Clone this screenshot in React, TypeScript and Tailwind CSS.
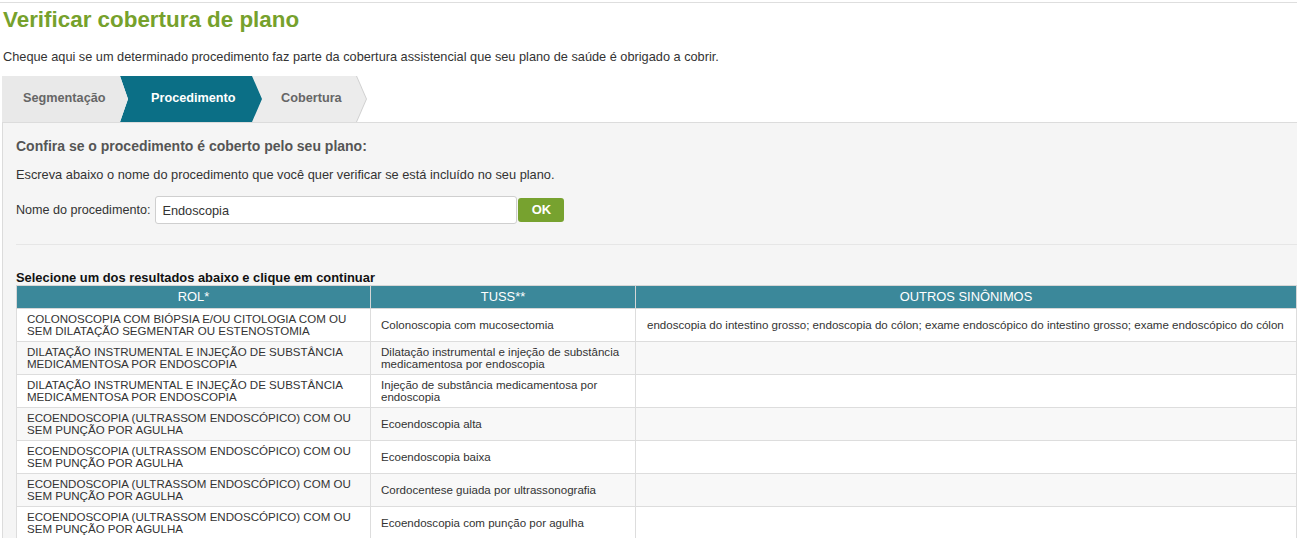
import React from 'react';

const rows = [
  {
    rol: 'COLONOSCOPIA COM BIÓPSIA E/OU CITOLOGIA COM OU SEM DILATAÇÃO SEGMENTAR OU ESTENOSTOMIA',
    tuss: 'Colonoscopia com mucosectomia',
    outros:
      'endoscopia do intestino grosso; endoscopia do cólon; exame endoscópico do intestino grosso; exame endoscópico do cólon',
  },
  {
    rol: 'DILATAÇÃO INSTRUMENTAL E INJEÇÃO DE SUBSTÂNCIA MEDICAMENTOSA POR ENDOSCOPIA',
    tuss: 'Dilatação instrumental e injeção de substância medicamentosa por endoscopia',
    outros: '',
  },
  {
    rol: 'DILATAÇÃO INSTRUMENTAL E INJEÇÃO DE SUBSTÂNCIA MEDICAMENTOSA POR ENDOSCOPIA',
    tuss: 'Injeção de substância medicamentosa por endoscopia',
    outros: '',
  },
  {
    rol: 'ECOENDOSCOPIA (ULTRASSOM ENDOSCÓPICO) COM OU SEM PUNÇÃO POR AGULHA',
    tuss: 'Ecoendoscopia alta',
    outros: '',
  },
  {
    rol: 'ECOENDOSCOPIA (ULTRASSOM ENDOSCÓPICO) COM OU SEM PUNÇÃO POR AGULHA',
    tuss: 'Ecoendoscopia baixa',
    outros: '',
  },
  {
    rol: 'ECOENDOSCOPIA (ULTRASSOM ENDOSCÓPICO) COM OU SEM PUNÇÃO POR AGULHA',
    tuss: 'Cordocentese guiada por ultrassonografia',
    outros: '',
  },
  {
    rol: 'ECOENDOSCOPIA (ULTRASSOM ENDOSCÓPICO) COM OU SEM PUNÇÃO POR AGULHA',
    tuss: 'Ecoendoscopia com punção por agulha',
    outros: '',
  },
];

const App = () => {
  return (
    <div className="min-h-screen bg-white font-['Liberation_Sans',Arial,sans-serif] text-[#333] overflow-hidden">
      <div className="mt-[2px] border-t border-[#dedede]">
        <h1 className="mt-[4px] pl-[3px] text-[22.4px] leading-[26px] font-bold text-[#76a12c]">
          Verificar cobertura de plano
        </h1>
        <p className="mt-[16px] pl-[3px] text-[12.75px] leading-[16px] text-[#333]">
          Cheque aqui se um determinado procedimento faz parte da cobertura assistencial que seu plano de saúde é obrigado a cobrir.
        </p>

        {/* steps */}
        <div className="mt-[11px] ml-[2px] flex h-[46px] text-[12.7px] font-bold">
          <div className="relative z-[3] flex w-[126px] items-center bg-[#e9e9e9] pl-[21px] text-[#666] [clip-path:polygon(0_0,calc(100%-8px)_0,100%_50%,calc(100%-8px)_100%,0_100%)]">
            Segmentação
          </div>
          <div className="relative z-[2] -ml-[8px] flex w-[142px] items-center bg-[#0b6f86] pl-[31px] text-white [clip-path:polygon(0_0,calc(100%-10px)_0,100%_50%,calc(100%-10px)_100%,0_100%,8px_50%)]">
            Procedimento
          </div>
          <div className="relative z-[1] -ml-[10px] w-[115px] bg-[#d0d0d0] [clip-path:polygon(0_0,calc(100%-10px)_0,100%_50%,calc(100%-10px)_100%,0_100%)]">
            <div className="flex h-full w-[114px] items-center bg-[#ececec] pl-[29px] text-[#666] [clip-path:polygon(0_0,calc(100%-10px)_0,100%_50%,calc(100%-10px)_100%,0_100%)]">
              Cobertura
            </div>
          </div>
        </div>

        {/* panel */}
        <div className="ml-[2px] border-t border-l border-[#dcdcdc] bg-[#f5f5f5] pl-[13px] pt-[15px] pb-[10px]">
          <h2 className="text-[14px] leading-[16px] font-bold text-[#555]">
            Confira se o procedimento é coberto pelo seu plano:
          </h2>
          <p className="mt-[13px] text-[12.8px] leading-[16px] text-[#333]">
            Escreva abaixo o nome do procedimento que você quer verificar se está incluído no seu plano.
          </p>
          <div className="mt-[13px] flex items-center text-[12.6px]">
            <label htmlFor="proc" className="text-[#333]">Nome do procedimento:</label>
            <input
              id="proc"
              type="text"
              defaultValue="Endoscopia"
              className="ml-[5px] h-[28px] w-[362px] rounded-[3px] border border-[#cfcfcf] bg-white px-[6px] text-[12.75px] text-[#333] outline-none"
            />
            <button className="ml-px h-[24px] w-[46px] rounded-[3px] bg-[#77a22f] text-[13px] font-bold text-white">
              OK
            </button>
          </div>

          <div className="mt-[20px] border-t border-[#e6e6e6]" />

          <h3 className="mt-[26px] text-[12.9px] leading-[14px] font-bold text-[#111]">
            Selecione um dos resultados abaixo e clique em continuar
          </h3>

          <table className="w-[1281px] table-fixed border-collapse text-[11.55px] leading-[12px]">
            <colgroup>
              <col className="w-[354px]" />
              <col className="w-[265px]" />
              <col />
            </colgroup>
            <thead>
              <tr className="h-[23px] bg-[#3b889a] text-[12.9px] text-white">
                <th className="border border-[#d6d6d6] font-normal">ROL*</th>
                <th className="border border-[#d6d6d6] font-normal">TUSS**</th>
                <th className="border border-[#d6d6d6] font-normal">OUTROS SINÔNIMOS</th>
              </tr>
            </thead>
            <tbody>
              {rows.map((row, i) => (
                <tr key={i} className={`h-[33px] ${i % 2 === 1 ? 'bg-[#f8f8f8]' : 'bg-white'}`}>
                  <td className="border border-[#dddddd] py-[4px] pl-[10px] pr-[8px] align-middle">{row.rol}</td>
                  <td className="border border-[#dddddd] py-[4px] pl-[10px] pr-[8px] align-middle">{row.tuss}</td>
                  <td className="border border-[#dddddd] py-[4px] pl-[11px] pr-[8px] align-middle">{row.outros}</td>
                </tr>
              ))}
            </tbody>
          </table>
        </div>
      </div>
    </div>
  );
};

export default App;
